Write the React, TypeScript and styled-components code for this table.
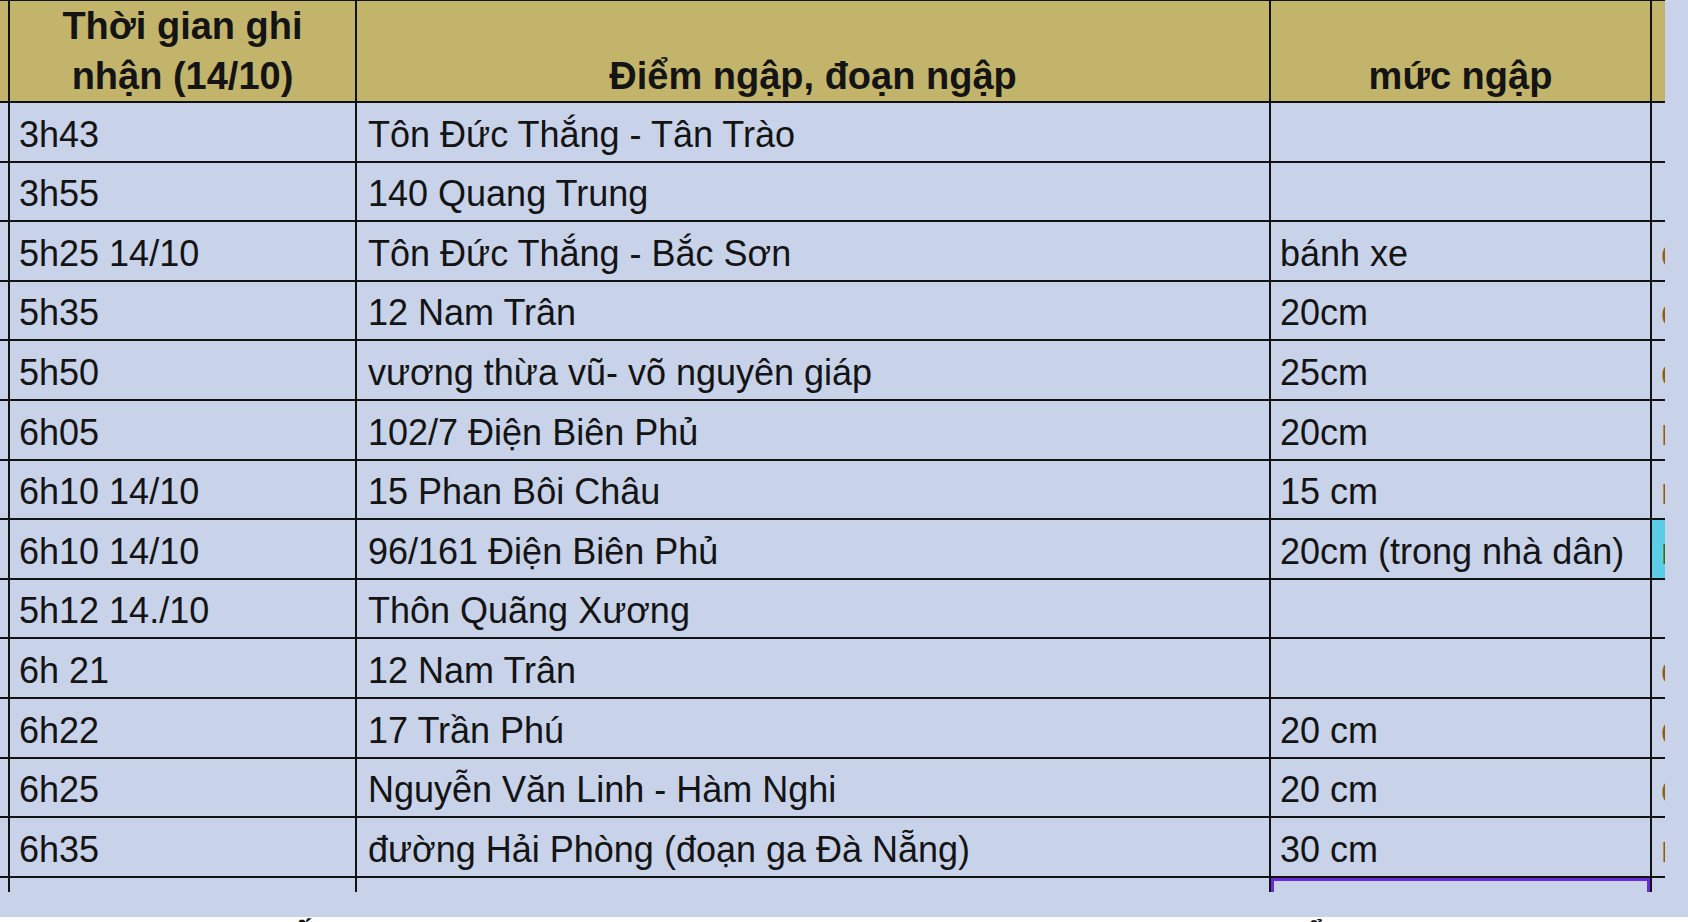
import styled, {createGlobalStyle, css} from 'styled-components';

const GlobalStyle = createGlobalStyle`
  html, body {
    margin: 0;
    padding: 0;
    background: #ffffff;
  }
  body {
    font-family: "Liberation Sans", Arial, sans-serif;
    color: #141414;
  }
`;

const LINE = '#121212';
const CELL_BG = '#c8d2e9';
const HEAD_BG = '#c3b46c';

const Page = styled.div`
  width: 1688px;
  height: 922px;
  display: flex;
  flex-direction: column;
  overflow: hidden;
`;

const Sheet = styled.div`
  height: 917px;
  flex: none;
  display: flex;
  background: ${CELL_BG};
  overflow: hidden;
`;

const Grid = styled.div`
  display: grid;
  grid-template-columns: 8px 347px 914px 381px 15px;
  grid-template-rows: 103px repeat(13, 59.6px) 14px;
  flex: none;
`;

type Col = 'stub' | 'time' | 'place' | 'level' | 'extra';
type Tone = 'plain' | 'fringe' | 'cyan';

const HeadCell = styled.div<{$col: Col}>`
  background: ${HEAD_BG};
  border-top: 1px solid ${LINE};
  border-bottom: 2px solid ${LINE};
  border-left: ${({$col}) => ($col === 'stub' ? 'none' : `2px solid ${LINE}`)};
  display: flex;
  align-items: flex-end;
  justify-content: center;
  text-align: center;
  font-weight: 700;
  font-size: 38px;
  line-height: 50px;
  padding: 0 2px;
  overflow: hidden;
  white-space: pre-line;
`;

const Cell = styled.div<{$col: Col; $tone?: Tone}>`
  background: ${({$tone}) => ($tone === 'cyan' ? '#5ccde6' : 'transparent')};
  border-bottom: 2px solid ${LINE};
  border-left: ${({$col}) => ($col === 'stub' ? 'none' : `2px solid ${LINE}`)};
  display: flex;
  align-items: flex-end;
  font-size: 36px;
  line-height: 40px;
  white-space: nowrap;
  overflow: hidden;
  padding: 0 4px 6px ${({$col}) => ($col === 'place' ? '11px' : '9px')};
  color: ${({$tone}) => ($tone === 'fringe' ? '#8a5a22' : $tone === 'cyan' ? '#2f6e2a' : '#141414')};
`;

const TailCell = styled.div<{$col: Col; $selected?: boolean}>`
  border-left: ${({$col}) => ($col === 'stub' ? 'none' : `2px solid ${LINE}`)};
  ${({$selected}) =>
    $selected &&
    css`
      box-shadow: inset 3px 3px 0 #6a2cd8, inset -3px 0 0 #6a2cd8;
    `}
`;

const Filler = styled.div`
  flex: 1;
  background: ${CELL_BG};
`;

const Below = styled.div`
  height: 5px;
  display: flex;
  overflow: hidden;
  font-weight: 700;
  font-size: 36px;
  line-height: 40px;
  color: #111;
`;

const Peek = styled.span<{$left: number}>`
  margin-left: ${({$left}) => $left}px;
  margin-top: 3px;
`;

interface Row {
  time: string;
  place: string;
  level: string;
  extra: string;
  tone: Tone;
}

const rows: Row[] = [
  {time: '3h43', place: 'Tôn Đức Thắng - Tân Trào', level: '', extra: '', tone: 'plain'},
  {time: '3h55', place: '140 Quang Trung', level: '', extra: '', tone: 'plain'},
  {time: '5h25 14/10', place: 'Tôn Đức Thắng - Bắc Sơn', level: 'bánh xe', extra: 'đã rút', tone: 'fringe'},
  {time: '5h35', place: '12 Nam Trân', level: '20cm', extra: 'đã rút', tone: 'fringe'},
  {time: '5h50', place: 'vương thừa vũ- võ nguyên giáp', level: '25cm', extra: 'đã rút', tone: 'fringe'},
  {time: '6h05', place: '102/7 Điện Biên Phủ', level: '20cm', extra: 'mưa', tone: 'fringe'},
  {time: '6h10 14/10', place: '15 Phan Bôi Châu', level: '15 cm', extra: 'mưa', tone: 'fringe'},
  {time: '6h10 14/10', place: '96/161 Điện Biên Phủ', level: '20cm (trong nhà dân)', extra: 'mưa', tone: 'cyan'},
  {time: '5h12 14./10', place: 'Thôn Quãng Xương', level: '', extra: '', tone: 'plain'},
  {time: '6h 21', place: '12 Nam Trân', level: '', extra: 'đã rút', tone: 'fringe'},
  {time: '6h22', place: '17 Trần Phú', level: '20 cm', extra: 'đã rút', tone: 'fringe'},
  {time: '6h25', place: 'Nguyễn Văn Linh - Hàm Nghi', level: '20 cm', extra: 'đã rút', tone: 'fringe'},
  {time: '6h35', place: 'đường Hải Phòng (đoạn ga Đà Nẵng)', level: '30 cm', extra: 'mưa', tone: 'fringe'},
];

export default function App() {
  return (
    <>
      <GlobalStyle />
      <Page>
        <Sheet>
          <Grid>
            <HeadCell $col="stub" />
            <HeadCell $col="time">{'Thời gian ghi\nnhận (14/10)'}</HeadCell>
            <HeadCell $col="place">Điểm ngập, đoạn ngập</HeadCell>
            <HeadCell $col="level">mức ngập</HeadCell>
            <HeadCell $col="extra" />

            {rows.map((row, i) => (
              <Row key={i} row={row} />
            ))}

            <TailCell $col="stub" />
            <TailCell $col="time" />
            <TailCell $col="place" />
            <TailCell $col="level" $selected />
            <TailCell $col="extra" />
          </Grid>
          <Filler />
        </Sheet>
        <Below>
          <Peek $left={288}>Ố</Peek>
          <Peek $left={985}>Ẩ</Peek>
        </Below>
      </Page>
    </>
  );
}

function Row({row}: {row: Row}) {
  return (
    <>
      <Cell $col="stub" />
      <Cell $col="time">{row.time}</Cell>
      <Cell $col="place">{row.place}</Cell>
      <Cell $col="level">{row.level}</Cell>
      <Cell $col="extra" $tone={row.tone}>{row.extra}</Cell>
    </>
  );
}
